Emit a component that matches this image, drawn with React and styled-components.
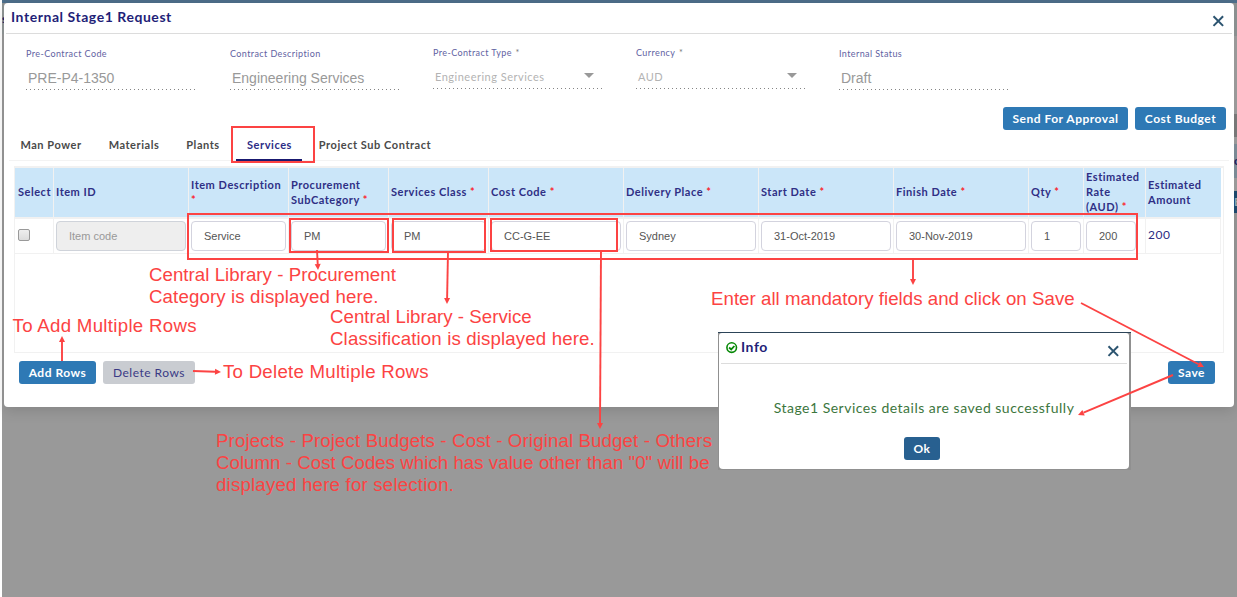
import React from "react";
import styled, { createGlobalStyle } from "styled-components";

const RED = "#fc4343";
const NAVY = "#1f1f78";

const Global = createGlobalStyle`
  * { box-sizing: border-box; }
  body { margin: 0; background: #fff; font-family: Lato, sans-serif; letter-spacing: 0.5px; overflow: hidden; }
`;

const Screen = styled.div`
  position: relative;
  width: 1237px;
  height: 597px;
  padding-left: 2px;
  overflow: hidden;
`;

const Backdrop = styled.div`
  height: 597px;
  padding: 0 0 0 2px;
  background: #999;
  border-top: 3px solid #4d6e8a;
`;

const EdgeStrip = styled.div`
  position: absolute;
  left: ${(p) => p.$x}px;
  top: 0;
  width: ${(p) => p.$w}px;
  display: flex;
  flex-direction: column;
`;

const EdgeBlock = styled.div`
  height: ${(p) => p.$h}px;
  line-height: ${(p) => p.$h}px;
  background: ${(p) => p.$c};
  color: ${(p) => p.$ink};
  font-size: 12px;
  font-weight: 700;
  overflow: hidden;
`;

const Dialog = styled.section`
  width: 1230px;
  height: 404px;
  background: #fff;
  border-radius: 4px;
  box-shadow: 0 4px 14px rgba(0, 0, 0, 0.13);
  padding: 0 2px;
`;

const DialogHead = styled.header`
  display: flex;
  justify-content: space-between;
  height: 31px;
  border-bottom: 1px solid #dcdcdc;
  padding: 5px 8px 0 5px;
`;

const DialogTitle = styled.h1`
  margin: 0;
  font-size: 14px;
  line-height: 18px;
  font-weight: 700;
  letter-spacing: 0.55px;
  color: ${NAVY};
`;

const CloseButton = styled.button`
  display: flex;
  border: 0;
  padding: 0;
  background: none;
  height: 12px;
  margin-top: ${(p) => p.$top}px;
`;

const Fields = styled.div`
  display: flex;
  gap: 33px;
  padding: 13px 0 0 20px;
`;

const Field = styled.div`
  width: 170px;
  height: 43px;
  margin-top: ${(p) => (p.$select ? -1 : 0)}px;
  background: repeating-linear-gradient(90deg, #858585 0 1px, transparent 1px 4px) left bottom / 100% 1px no-repeat;
  &:first-child { margin-right: 1px; }
`;

const FieldLabel = styled.div`
  font-size: 9px;
  line-height: 14px;
  letter-spacing: 0.41px;
  color: #6262a2;
  white-space: nowrap;
  span { color: #777; margin-left: 1px; }
`;

const FieldValue = styled.div`
  display: flex;
  justify-content: space-between;
  align-items: center;
  height: 20px;
  margin-top: ${(p) => (p.$select ? 6 : 7)}px;
  padding-left: 2px;
  padding-right: 9px;
  color: ${(p) => (p.$select ? "#b3b3b3" : "#999")};
  font-family: ${(p) => (p.$select ? "Lato" : '"Liberation Sans"')}, sans-serif;
  font-size: ${(p) => (p.$select ? 11 : 14)}px;
  letter-spacing: ${(p) => (p.$select ? 0.5 : 0)}px;
`;

const Caret = styled.i`
  border: 5px solid transparent;
  border-top-color: #999;
  border-bottom: 0;
  margin-bottom: 2px;
`;

const Actions = styled.div`
  display: flex;
  justify-content: flex-end;
  gap: 7px;
  padding: 17px 6px 0 0;
`;

const Button = styled.button`
  width: ${(p) => p.$w}px;
  height: 23px;
  border: 0;
  border-radius: 3px;
  padding: 0;
  font-family: Lato, sans-serif;
  font-size: 12px;
  font-weight: ${(p) => (p.$muted ? 400 : 700)};
  letter-spacing: 0.5px;
  white-space: nowrap;
  color: ${(p) => (p.$muted ? "#3a3a85" : "#fff")};
  background: ${(p) => (p.$muted ? "#c9ccd1" : p.$dark ? "#286090" : "#2e79b5")};
`;

const Tabs = styled.nav`
  display: flex;
  height: 31px;
  margin: 0 3px;
  border-bottom: 1px solid #f3f3f3;
`;

const Tab = styled.div`
  height: 31px;
  width: ${(p) => p.$w}px;
  padding: 7px 0 0 1px;
  font-size: 11px;
  line-height: 16px;
  font-weight: 700;
  letter-spacing: 0.55px;
  text-align: center;
  white-space: nowrap;
  color: ${(p) => (p.$active ? "#2c2c86" : "#4a4a4a")};
  border-bottom: 2px solid ${(p) => (p.$active ? "#191970" : "transparent")};
  margin-right: ${(p) => p.$gap || 0}px;
`;

const TablePane = styled.div`
  width: 1210px;
  height: 187px;
  margin: 5px 0 0 8px;
  border: 1px solid #f1f1f1;
  border-top-width: 2px;
`;

const HeadRow = styled.div`
  display: grid;
  grid-template-columns: 38px 135px 100px 100px 100px 135px 135px 135px 135px 55px 62px 76px;
  width: 1206px;
  height: 49px;
  background: #cbe6f9;
`;

const HeadCell = styled.div`
  display: flex;
  align-items: center;
  padding: 0 0 2px 2px;
  border-left: 1px solid #f1f1f1;
  font-size: 11px;
  line-height: 15px;
  font-weight: 700;
  letter-spacing: 0.53px;
  color: #2f2f85;
  &:first-child { border-left: 0; padding-left: 3px; }
`;

const Required = styled.em`
  font-style: normal;
  color: #fa1f2f;
`;

const BodyRow = styled(HeadRow)`
  height: 37px;
  background: #fff;
  border-top: 2px solid #f1f1f1;
  border-bottom: 1px solid #f1f1f1;
`;

const BodyCell = styled.div`
  display: flex;
  align-items: center;
  padding: 0 2px ${(p) => (p.$last ? 3 : 0)}px;
  border-left: 1px solid #f1f1f1;
  border-right: ${(p) => (p.$last ? "1px solid #f1f1f1" : "0")};
  font-size: 12px;
  color: #2b2b82;
  &:first-child { border-left: 0; }
`;

const Entry = styled.div`
  width: ${(p) => (p.$w ? `${p.$w}px` : "100%")};
  height: 30px;
  padding-left: 12px;
  line-height: 29px;
  border: 1px solid ${(p) => (p.$off ? "#cfd3da" : "#d3d3de")};
  border-radius: 4px;
  background: ${(p) => (p.$off ? "#eee" : "#fff")};
  color: ${(p) => (p.$off ? "#999" : "#555")};
  font-family: "Liberation Sans", sans-serif;
  font-size: 11px;
  letter-spacing: 0;
`;

const Check = styled.span`
  width: 12px;
  height: 12px;
  margin-left: 1px;
  margin-bottom: 2px;
  border: 1px solid #999;
  border-radius: 2px;
  background: linear-gradient(#eee, #dcdcdc);
`;

const Footer = styled.footer`
  display: flex;
  gap: 7px;
  padding: 8px 17px 0 13px;
  ${Button}:last-child { margin-left: auto; }
`;

const Popup = styled.div`
  position: absolute;
  left: 718px;
  top: 332px;
  width: 413px;
  height: 138px;
  background: #909090;
  border-top: 1px solid #2c4458;
  padding: 0 2px 1px 1px;
`;

const PopupCard = styled.div`
  height: 136px;
  background: #fff;
  border-radius: 3px 3px 4px 4px;
  padding: 0 2px;
  display: flex;
  flex-direction: column;
  align-items: center;
  ${Button} { margin-right: 4px; }
`;

const PopupHead = styled.div`
  width: 100%;
  height: 31px;
  display: flex;
  padding: 5px 8px 0 5px;
  border-bottom: 1px solid #dcdcdc;
  ${CloseButton} { margin-left: auto; }
  ${DialogTitle} { margin-left: 3px; }
`;

const StatusIcon = styled.svg`
  margin-top: 4px;
`;

const Message = styled.p`
  margin: 35px 0 20px;
  font-size: 14px;
  line-height: 18px;
  letter-spacing: 0.5px;
  color: #3c763d;
  white-space: nowrap;
`;

const Note = styled.p`
  position: absolute;
  left: ${(p) => p.$x}px;
  top: ${(p) => p.$y}px;
  margin: 0;
  font-family: "Liberation Sans", sans-serif;
  font-size: 18.67px;
  line-height: 22px;
  letter-spacing: ${(p) => p.$ls || 0}px;
  color: ${RED};
  white-space: pre;
`;

const NoteLine = styled.span`
  display: block;
  letter-spacing: ${(p) => p.$ls}px;
`;

const Highlight = styled.div`
  position: absolute;
  left: ${(p) => p.$x}px;
  top: ${(p) => p.$y}px;
  width: ${(p) => p.$w}px;
  height: ${(p) => p.$h}px;
  border: 2px solid ${RED};
`;

const ArrowLayer = styled.svg`
  position: absolute;
  left: 0;
  top: 0;
`;

const Cross = () => (
  <svg width="12" height="12" viewBox="0 0 12 12">
    <path d="M1.5 1.3 11.1 10.9M11.1 1.3 1.5 10.9" stroke="#2c5470" strokeWidth="2" />
  </svg>
);

const fields = [
  { label: "Pre-Contract Code", value: "PRE-P4-1350" },
  { label: "Contract Description", value: "Engineering Services" },
  { label: "Pre-Contract Type", value: "Engineering Services", select: true },
  { label: "Currency", value: "AUD", select: true },
  { label: "Internal Status", value: "Draft" },
];

const heads = [
  ["Select"], ["Item ID"], ["Item Description", true], ["Procurement SubCategory", true],
  ["Services Class", true], ["Cost Code", true], ["Delivery Place", true],
  ["Start Date", true], ["Finish Date", true], ["Qty", true], ["Estimated Rate (AUD)", true], ["Estimated Amount"],
];

const entries = [
  ["Service"], ["PM"], ["PM"], ["CC-G-EE"], ["Sydney"], ["31-Oct-2019"], ["30-Nov-2019"], ["1"], ["200", 50],
];

const arrows = [
  [317, 250, 318, 270], [448, 251, 447, 304], [601, 250, 600, 429], [913, 258, 913, 285],
  [62, 361, 62, 336], [193, 371, 221, 372], [1081, 303, 1204, 367], [1173, 375, 1078, 415],
];

const Arrow = ({ p: [x1, y1, x2, y2] }) => {
  const len = Math.hypot(x2 - x1, y2 - y1);
  const ux = (x2 - x1) / len;
  const uy = (y2 - y1) / len;
  const bx = x2 - ux * 6;
  const by = y2 - uy * 6;
  return (
    <g>
      <line x1={x1} y1={y1} x2={bx} y2={by} stroke={RED} strokeWidth="1.9" />
      <polygon fill={RED} points={`${x2},${y2} ${bx - uy * 3},${by + ux * 3} ${bx + uy * 3},${by - ux * 3}`} />
    </g>
  );
};

export default function App() {
  return (
    <Screen>
      <Global />
      <Backdrop>
        <Dialog>
          <DialogHead>
            <DialogTitle>Internal Stage1 Request</DialogTitle>
            <CloseButton $top={7}><Cross /></CloseButton>
          </DialogHead>
          <Fields>
            {fields.map((f) => (
              <Field key={f.label} $select={f.select}>
                <FieldLabel>{f.label}{f.select && <span> *</span>}</FieldLabel>
                <FieldValue $select={f.select}>{f.value}{f.select && <Caret />}</FieldValue>
              </Field>
            ))}
          </Fields>
          <Actions>
            <Button $w={125}>Send For Approval</Button>
            <Button $w={91}>Cost Budget</Button>
          </Actions>
          <Tabs>
            <Tab $w={83} $gap={1}>Man Power</Tab>
            <Tab $w={81}>Materials</Tab>
            <Tab $w={57} $gap={5}>Plants</Tab>
            <Tab $w={66} $active>Services</Tab>
            <Tab $w={145}>Project Sub Contract</Tab>
          </Tabs>
          <TablePane>
            <HeadRow>
              {heads.map(([text, req]) => (
                <HeadCell key={text}><span>{text}{req && <> <Required>*</Required></>}</span></HeadCell>
              ))}
            </HeadRow>
            <BodyRow>
              <BodyCell><Check /></BodyCell>
              <BodyCell><Entry $off>Item code</Entry></BodyCell>
              {entries.map(([e, w], i) => <BodyCell key={i}><Entry $w={w}>{e}</Entry></BodyCell>)}
              <BodyCell $last>200</BodyCell>
            </BodyRow>
          </TablePane>
          <Footer>
            <Button $w={77}>Add Rows</Button>
            <Button $w={92} $muted>Delete Rows</Button>
            <Button $w={47}>Save</Button>
          </Footer>
        </Dialog>
      </Backdrop>
      <EdgeStrip $x={2} $w={2}>
        <EdgeBlock $h={3} $c="#4d6e8a" />
        <EdgeBlock $h={31} $c="#8a9090" $ink="#20205e">s</EdgeBlock>
      </EdgeStrip>
      <EdgeStrip $x={1234} $w={3}>
        <EdgeBlock $h={3} $c="#4d6e8a" />
        <EdgeBlock $h={33} $c="#8a9090" />
        <EdgeBlock $h={78} $c="#999" />
        <EdgeBlock $h={23} $c="#777" />
        <EdgeBlock $h={7} $c="#999" />
        <EdgeBlock $h={34} $c="#7a8a95" $ink="#20205e">c</EdgeBlock>
        <EdgeBlock $h={13} $c="#999" />
        <EdgeBlock $h={22} $c="#1c486c" $ink="#9aa6b0">E</EdgeBlock>
      </EdgeStrip>
      <Popup>
        <PopupCard>
          <PopupHead>
            <StatusIcon width="12" height="12" viewBox="0 0 12 12">
              <circle cx="5.7" cy="5.6" r="4.8" fill="none" stroke="#068806" strokeWidth="1.6" />
              <path d="M3.1 5.5 5.2 7.4 8.4 4" fill="none" stroke="#068806" strokeWidth="1.8" />
            </StatusIcon>
            <DialogTitle>Info</DialogTitle>
            <CloseButton $top={7}><Cross /></CloseButton>
          </PopupHead>
          <Message>Stage1 Services details are saved successfully</Message>
          <Button $w={36} $dark>Ok</Button>
        </PopupCard>
      </Popup>
      <Highlight $x={231} $y={126} $w={84} $h={37} />
      <Highlight $x={187} $y={213} $w={951} $h={47} />
      <Highlight $x={289} $y={218} $w={100} $h={35} />
      <Highlight $x={392} $y={218} $w={94} $h={35} />
      <Highlight $x={490} $y={218} $w={128} $h={34} />
      <Note $x={149} $y={264}>
        <NoteLine $ls={0.04}>Central Library - Procurement</NoteLine>
        <NoteLine $ls={0.13}>Category is displayed here.</NoteLine>
      </Note>
      <Note $x={330} $y={306}>
        <NoteLine $ls={0.02}>Central Library - Service</NoteLine>
        <NoteLine $ls={0.14}>Classification is displayed here.</NoteLine>
      </Note>
      <Note $x={12.5} $y={315} $ls={0.3}>To Add Multiple Rows</Note>
      <Note $x={223} $y={361} $ls={0.25}>To Delete Multiple Rows</Note>
      <Note $x={711} $y={288} $ls={0.04}>Enter all mandatory fields and click on Save</Note>
      <Note $x={216} $y={430}>
        <NoteLine $ls={0.13}>Projects - Project Budgets - Cost - Original Budget - Others</NoteLine>
        <NoteLine $ls={0.04}>Column - Cost Codes which has value other than "0" will be</NoteLine>
        <NoteLine $ls={0.2}>displayed here for selection.</NoteLine>
      </Note>
      <ArrowLayer width="1237" height="597">
        {arrows.map((p, i) => <Arrow key={i} p={p} />)}
      </ArrowLayer>
    </Screen>
  );
}
